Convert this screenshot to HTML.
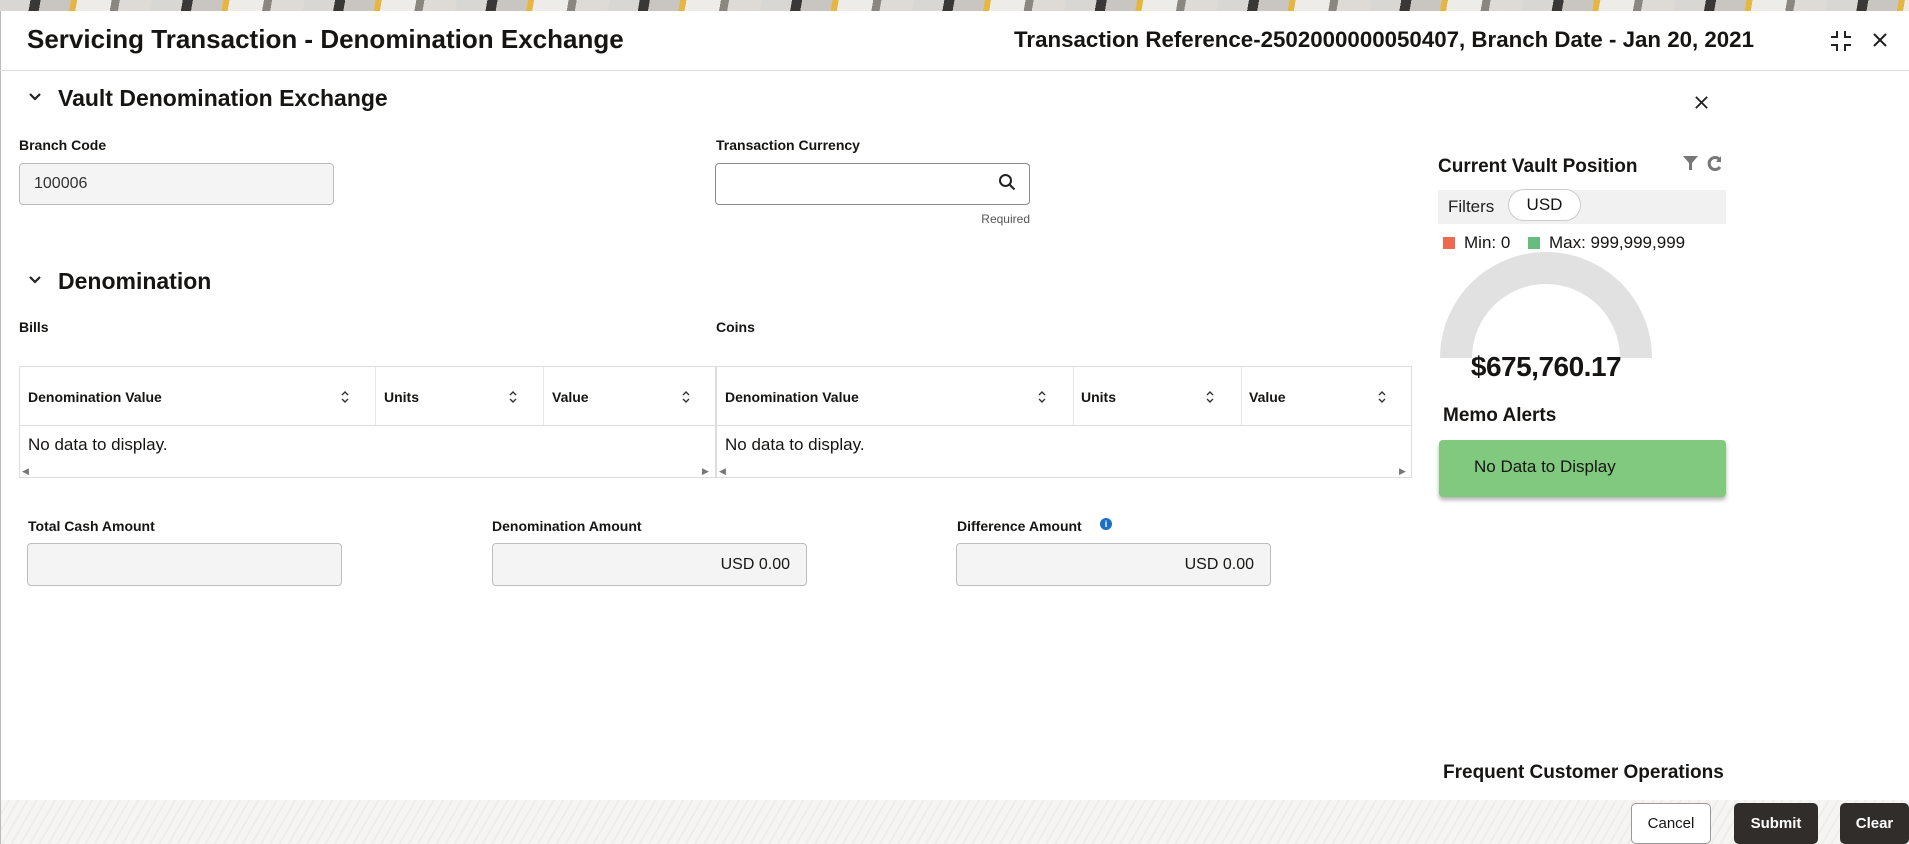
<!DOCTYPE html>
<html><head><meta charset="utf-8"><style>
*{box-sizing:border-box;margin:0;padding:0}
body{width:1909px;height:844px;overflow:hidden;background:#fff;font-family:"Liberation Sans",sans-serif;color:#161513;position:relative}
.abs{position:absolute}
.banner{left:0;top:0;width:1909px;height:11px;background:repeating-linear-gradient(100deg,#d9d7d3 0 30px,#3a3836 30px 40px,#c9c6c1 40px 70px,#e6b740 70px 76px,#eeece9 76px 110px,#8a8680 110px 118px,#dedbd6 118px 150px)}
.lbl{font-size:14px;font-weight:bold;color:#161513}
.inp{border:1px solid #bdbdbd;border-radius:4px;background:#f4f4f4}
.th{font-size:14px;font-weight:bold}
.btn{border-radius:5px;font-size:15px;font-weight:bold;display:flex;align-items:center;justify-content:center}
</style></head><body>
<div class="abs banner"></div>
<div class="abs" style="left:0;top:11px;width:1px;height:833px;background:#bbb"></div>
<div class="abs" style="left:27px;top:24px;font-size:26px;font-weight:bold">Servicing Transaction - Denomination Exchange</div>
<div class="abs" style="left:954px;top:27px;width:800px;text-align:right;font-size:22.3px;font-weight:bold">Transaction Reference-2502000000050407, Branch Date - Jan 20, 2021</div>
<svg class="abs" style="left:1830px;top:30px" width="22" height="22" viewBox="0 0 22 22" fill="none" stroke="#222" stroke-width="2"><path d="M7 1v6H1M15 1v6h6M7 21v-6H1M15 21v-6h6"/></svg>
<svg class="abs" style="left:1872px;top:32px" width="16" height="16" viewBox="0 0 16 16" stroke="#222" stroke-width="2"><path d="M2 2l12 12M14 2L2 14"/></svg>
<div class="abs" style="left:0;top:70px;width:1909px;height:1px;background:#ddd"></div>

<svg class="abs" style="left:28px;top:92px" width="14" height="10" viewBox="0 0 14 10" fill="none" stroke="#222" stroke-width="2.2"><path d="M2 2l5 5 5-5"/></svg>
<div class="abs" style="left:58px;top:85px;font-size:23px;font-weight:bold">Vault Denomination Exchange</div>
<svg class="abs" style="left:1694px;top:95px" width="15" height="15" viewBox="0 0 16 16" stroke="#222" stroke-width="2"><path d="M2 2l12 12M14 2L2 14"/></svg>

<div class="abs lbl" style="left:19px;top:137px">Branch Code</div>
<div class="abs inp" style="left:19px;top:163px;width:315px;height:42px;font-size:16px;padding:11px 14px;color:#333">100006</div>
<div class="abs lbl" style="left:716px;top:137px">Transaction Currency</div>
<div class="abs" style="left:715px;top:163px;width:315px;height:42px;border:1px solid #8a8a8a;border-radius:4px"></div>
<svg class="abs" style="left:998px;top:173px" width="18" height="18" viewBox="0 0 18 18" fill="none" stroke="#222" stroke-width="2"><circle cx="7.5" cy="7.5" r="5.5"/><path d="M11.5 11.5l5 5"/></svg>
<div class="abs" style="left:930px;top:212px;width:100px;text-align:right;font-size:12px;color:#555">Required</div>

<svg class="abs" style="left:28px;top:275px" width="14" height="10" viewBox="0 0 14 10" fill="none" stroke="#222" stroke-width="2.2"><path d="M2 2l5 5 5-5"/></svg>
<div class="abs" style="left:58px;top:268px;font-size:23px;font-weight:bold">Denomination</div>
<div class="abs lbl" style="left:19px;top:319px">Bills</div>
<div class="abs lbl" style="left:716px;top:319px">Coins</div>

<div class="abs" style="left:19px;top:366px;width:697px;height:112px;border:1px solid #ddd"></div>
<div class="abs" style="left:19px;top:425px;width:697px;height:1px;background:#ddd"></div>
<div class="abs" style="left:375px;top:366px;width:1px;height:59px;background:#e5e5e5"></div>
<div class="abs" style="left:543px;top:366px;width:1px;height:59px;background:#e5e5e5"></div>
<div class="abs th" style="left:28px;top:389px">Denomination Value</div>
<div class="abs th" style="left:384px;top:389px">Units</div>
<div class="abs th" style="left:552px;top:389px">Value</div>
<div class="abs" style="left:28px;top:435px;font-size:17px">No data to display.</div>
<div class="abs" style="left:22px;top:466px;font-size:9px;color:#777">◀</div>
<div class="abs" style="left:702px;top:466px;font-size:9px;color:#777">▶</div>
<div class="abs" style="left:716px;top:366px;width:696px;height:112px;border:1px solid #ddd"></div>
<div class="abs" style="left:716px;top:425px;width:696px;height:1px;background:#ddd"></div>
<div class="abs" style="left:1073px;top:366px;width:1px;height:59px;background:#e5e5e5"></div>
<div class="abs" style="left:1241px;top:366px;width:1px;height:59px;background:#e5e5e5"></div>
<div class="abs th" style="left:725px;top:389px">Denomination Value</div>
<div class="abs th" style="left:1081px;top:389px">Units</div>
<div class="abs th" style="left:1249px;top:389px">Value</div>
<div class="abs" style="left:725px;top:435px;font-size:17px">No data to display.</div>
<div class="abs" style="left:719px;top:466px;font-size:9px;color:#777">◀</div>
<div class="abs" style="left:1399px;top:466px;font-size:9px;color:#777">▶</div>
<svg class="abs" style="left:340px;top:389px" width="10" height="16" viewBox="0 0 10 16" fill="none" stroke="#333" stroke-width="1.4"><path d="M2 6l3-3 3 3M2 10l3 3 3-3"/></svg>
<svg class="abs" style="left:508px;top:389px" width="10" height="16" viewBox="0 0 10 16" fill="none" stroke="#333" stroke-width="1.4"><path d="M2 6l3-3 3 3M2 10l3 3 3-3"/></svg>
<svg class="abs" style="left:681px;top:389px" width="10" height="16" viewBox="0 0 10 16" fill="none" stroke="#333" stroke-width="1.4"><path d="M2 6l3-3 3 3M2 10l3 3 3-3"/></svg>
<svg class="abs" style="left:1037px;top:389px" width="10" height="16" viewBox="0 0 10 16" fill="none" stroke="#333" stroke-width="1.4"><path d="M2 6l3-3 3 3M2 10l3 3 3-3"/></svg>
<svg class="abs" style="left:1205px;top:389px" width="10" height="16" viewBox="0 0 10 16" fill="none" stroke="#333" stroke-width="1.4"><path d="M2 6l3-3 3 3M2 10l3 3 3-3"/></svg>
<svg class="abs" style="left:1377px;top:389px" width="10" height="16" viewBox="0 0 10 16" fill="none" stroke="#333" stroke-width="1.4"><path d="M2 6l3-3 3 3M2 10l3 3 3-3"/></svg>

<div class="abs lbl" style="left:28px;top:518px">Total Cash Amount</div>
<div class="abs lbl" style="left:492px;top:518px">Denomination Amount</div>
<div class="abs lbl" style="left:957px;top:518px">Difference Amount</div>
<div class="abs" style="left:1100px;top:518px;width:12px;height:12px;border-radius:50%;background:#1b6fc4;color:#fff;font-size:9px;font-weight:bold;text-align:center;line-height:12px">i</div>
<div class="abs inp" style="left:27px;top:543px;width:315px;height:43px"></div>
<div class="abs inp" style="left:492px;top:543px;width:315px;height:43px;font-size:16px;text-align:right;padding:12px 16px">USD 0.00</div>
<div class="abs inp" style="left:956px;top:543px;width:315px;height:43px;font-size:16px;text-align:right;padding:12px 16px">USD 0.00</div>

<div class="abs" style="left:1438px;top:156px;font-size:19px;font-weight:bold">Current Vault Position</div>
<svg class="abs" style="left:1682px;top:155px" width="17" height="17" viewBox="0 0 17 17" fill="#777"><path d="M1 1h15l-6 7v7h-3V8z"/></svg>
<svg class="abs" style="left:1706px;top:155px" width="17" height="17" viewBox="0 0 17 17" fill="none" stroke="#777" stroke-width="3"><path d="M14 5A6 6 0 1 0 14 12"/><path d="M15 1v6h-5" fill="#777" stroke="none"/></svg>
<div class="abs" style="left:1438px;top:190px;width:288px;height:34px;background:#f1f1f1"></div>
<div class="abs" style="left:1448px;top:197px;font-size:17px;color:#222">Filters</div>
<div class="abs" style="left:1508px;top:189px;width:73px;height:32px;border:1px solid #ccc;border-radius:16px;background:#fff;font-size:17px;text-align:center;line-height:30px">USD</div>
<div class="abs" style="left:1443px;top:237px;width:12px;height:12px;background:#ec6a4d"></div>
<div class="abs" style="left:1464px;top:233px;font-size:17px">Min: 0</div>
<div class="abs" style="left:1528px;top:237px;width:12px;height:12px;background:#67bd80"></div>
<div class="abs" style="left:1549px;top:233px;font-size:17px">Max: 999,999,999</div>
<svg class="abs" style="left:1440px;top:251px" width="212" height="107" viewBox="0 0 212 107"><path d="M0 107A106 106 0 0 1 212 107H180A74 74 0 0 0 32 107Z" fill="#e1e1e1"/></svg>
<div class="abs" style="left:1440px;top:351px;width:212px;text-align:center;font-size:28px;font-weight:bold;letter-spacing:-0.5px">$675,760.17</div>
<div class="abs" style="left:1443px;top:405px;font-size:19px;font-weight:bold">Memo Alerts</div>
<div class="abs" style="left:1439px;top:440px;width:287px;height:57px;background:#80c97f;border-radius:4px;box-shadow:0 3px 4px rgba(0,0,0,.3);font-size:17px;padding:17px 35px">No Data to Display</div>
<div class="abs" style="left:1443px;top:762px;font-size:19px;font-weight:bold">Frequent Customer Operations</div>

<div class="abs" style="left:1px;top:800px;width:1908px;height:44px;background:repeating-linear-gradient(120deg,#f6f5f3 0 6px,#efedea 6px 8px)"></div>
<div class="abs btn" style="left:1631px;top:803px;width:80px;height:41px;background:#fff;border:1px solid #999;font-weight:normal;font-size:15px">Cancel</div>
<div class="abs btn" style="left:1734px;top:803px;width:84px;height:41px;background:#312d2a;color:#fff">Submit</div>
<div class="abs btn" style="left:1840px;top:803px;width:69px;height:41px;background:#312d2a;color:#fff">Clear</div>
</body></html>
